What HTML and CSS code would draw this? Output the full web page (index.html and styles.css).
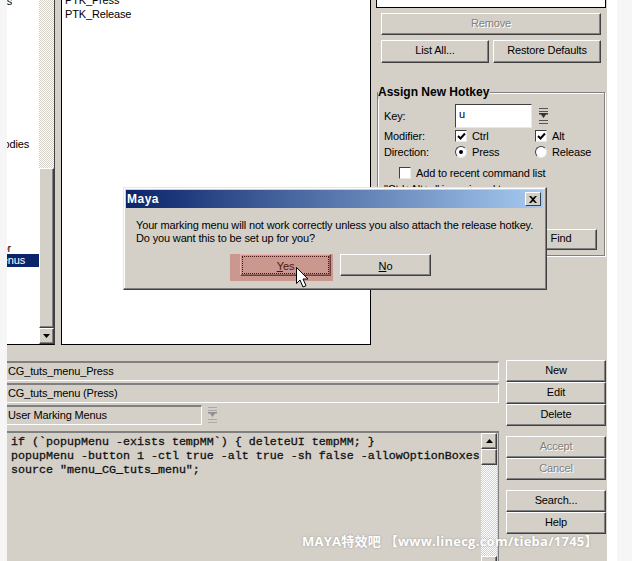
FILE: index.html
```html
<!DOCTYPE html>
<html lang="en">
<head>
<meta charset="utf-8">
<title>Maya Hotkey Editor</title>
<link rel="stylesheet" href="styles.css">
</head>
<body>
<main class="app">
  <section class="top">
    <div class="cat-list">
      <div class="cat-items">
        <div class="cat-text cat-s">s</div>
        <div class="cat-text cat-bodies">bodies</div>
        <div class="cat-text cat-or">or</div>
        <div class="cat-text cat-sel">Menus</div>
      </div>
      <div class="vscroll">
        <div class="track"></div>
        <div class="thumb"></div>
        <div class="arrow"><svg width="7" height="4" viewBox="0 0 7 4"><path d="M0 0h7L3.500 4z"/></svg></div>
      </div>
    </div>
    <div class="cmd-list">
      <div>PTK_Press</div>
      <div>PTK_Release</div>
    </div>
    <div class="side">
      <div class="side-box"></div>
      <button class="btn btn-wide dis">Remove</button>
      <div class="btn-row">
        <button class="btn btn-half">List All...</button>
        <button class="btn btn-half">Restore Defaults</button>
      </div>
      <div class="group">
        <div class="legend">Assign New Hotkey</div>
        <div class="key-row">
          <span class="lab">Key:</span>
          <div class="key-input">u</div>
          <svg class="drag" width="10" height="16" viewBox="0 0 10 16"><path d="M0 .5h9M0 3.500h9" stroke="#555" fill="none"/><path d="M0 5h9v1.500H7L4.500 10 2 6.500H0z" fill="#333"/><path d="M0 12.500h9M0 15.500h9" stroke="#555" fill="none"/></svg>
        </div>
        <div class="opt-row">
          <span class="lab">Modifier:</span>
          <div class="opt"><span class="check"><svg width="9" height="9" viewBox="0 0 9 9"><path d="M1 4l2.500 2.500L8 1.500" fill="none" stroke="#000" stroke-width="2"/></svg></span>Ctrl</div>
          <div class="opt"><span class="check"><svg width="9" height="9" viewBox="0 0 9 9"><path d="M1 4l2.500 2.500L8 1.500" fill="none" stroke="#000" stroke-width="2"/></svg></span>Alt</div>
        </div>
        <div class="opt-row">
          <span class="lab">Direction:</span>
          <div class="opt"><span class="radio on"></span>Press</div>
          <div class="opt"><span class="radio"></span>Release</div>
        </div>
        <div class="add-row"><span class="check"></span>Add to recent command list</div>
        <div class="assigned">"Ctrl+Alt+u" is assigned to:</div>
        <div class="find-row"><button class="btn btn-find">Find</button></div>
      </div>
    </div>
  </section>
  <section class="bottom">
    <div class="form">
      <div class="field">CG_tuts_menu_Press</div>
      <div class="field">CG_tuts_menu (Press)</div>
      <div class="cat-row">
        <div class="field field-short">User Marking Menus</div>
        <svg class="drag drag-off" width="10" height="16" viewBox="0 0 10 16"><path d="M0 .5h9M0 3.500h9" stroke="#aaa" fill="none"/><path d="M0 5h9v1.500H7L4.500 10 2 6.500H0z" fill="#909090"/><path d="M0 12.500h9M0 15.500h9" stroke="#aaa" fill="none"/></svg>
      </div>
      <div class="code-box">
        <pre class="code">if (`popupMenu -exists tempMM`) { deleteUI tempMM; }
popupMenu -button 1 -ctl true -alt true -sh false -allowOptionBoxes
source "menu_CG_tuts_menu";</pre>
        <div class="code-scroll">
          <div class="arrow"><svg width="7" height="4" viewBox="0 0 7 4"><path d="M0 4h7L3.500 0z"/></svg></div>
          <div class="thumb"></div>
          <div class="track"></div>
          <div class="arrow"></div>
        </div>
      </div>
    </div>
    <div class="actions">
      <button class="btn btn-act">New</button>
      <button class="btn btn-act">Edit</button>
      <button class="btn btn-act">Delete</button>
      <button class="btn btn-act dis gap-a">Accept</button>
      <button class="btn btn-act dis">Cancel</button>
      <button class="btn btn-act gap-a">Search...</button>
      <button class="btn btn-act">Help</button>
    </div>
  </section>
</main>
<aside class="dialog">
  <header class="title"><span>Maya</span><span class="close"><svg width="8" height="7" viewBox="0 0 8 7"><path d="M0 0l2 0 2 2 2-2 2 0-3 3.500 3 3.500-2 0-2-2-2 2-2 0 3-3.500z"/></svg></span></header>
  <p class="msg">Your marking menu will not work correctly unless you also attach the release hotkey.<br>Do you want this to be set up for you?</p>
  <div class="dlg-btns">
    <button class="dbtn yes"><u>Y</u>es</button>
    <button class="dbtn"><u>N</u>o</button>
  </div>
</aside>
<div class="mark"></div>
<svg class="cursor" width="13" height="22" viewBox="0 0 13 22"><path d="M.5.500v16l3.500-3.500 3 7 3-1.300-3-6.700h5z" fill="#fff" stroke="#000"/></svg>
<div class="watermark">MAYA特效吧 【www.linecg.com/tieba/1745】</div>
</body>
</html>
```
FILE: styles.css
```css
* { box-sizing: border-box; }
html { background: linear-gradient(90deg, #f6f6f6 0 7px, #fff 7px 617px, #f6f6f6 617px); }
html, body { margin: 0; height: 561px; overflow: hidden; }
body { font: 11px/14px "Liberation Sans", Arial, sans-serif; letter-spacing: -.15px; color: #000; }
button { font: inherit; letter-spacing: inherit; color: inherit; padding: 0 0 3px; margin: 0; }

.app { width: 600px; height: 561px; margin-left: 7px; background: #d4d0c8; display: flex; flex-direction: column; overflow: hidden; }
.top { height: 345px; display: flex; flex: none; }
.bottom { flex: 1; display: flex; padding-top: 15px; min-height: 0; }

.cat-list { width: 48px; height: 345px; flex: none; display: flex; border-bottom: 1px solid #000; border-right: 1px solid #404040; background: #fff; }
.cat-items { width: 32px; height: 344px; position: relative; overflow: hidden; background: #fff; }
.cat-text { position: absolute; white-space: nowrap; }
.cat-s { top: -6px; right: 27px; }
.cat-bodies { top: 137px; right: 10px; }
.cat-or { top: 241px; right: 28px; }
.cat-sel { top: 254px; left: 0; width: 32px; height: 13px; line-height: 13px; background: #0a246a; color: #fff; padding-right: 14px; display: flex; justify-content: flex-end; }

.vscroll { width: 15px; height: 344px; display: flex; flex-direction: column; }
.track { flex: 1; background: repeating-conic-gradient(#d4d0c8 0 25%, #fff 0 50%) 0 0 / 2px 2px; }
.thumb, .arrow { flex: none; background: #d4d0c8; border: 1px solid; border-color: #fff #404040 #404040 #fff; box-shadow: inset -1px -1px 0 #808080; display: flex; align-items: center; justify-content: center; }
.vscroll .track { flex: none; height: 168px; }
.vscroll .thumb { height: 160px; }
.arrow { height: 16px; }

.cmd-list { width: 310px; height: 345px; margin-left: 6px; flex: none; background: #fff; border: 1px solid #000; border-top: 0; overflow: hidden; padding: 0 0 0 3px; }
.cmd-list div:first-child { margin-top: -7px; }

.side { width: 231px; margin-left: 5px; flex: none; display: flex; flex-direction: column; }
.side-box { height: 8px; width: 230px; background: #fff; border: 1px solid #000; border-top: 0; flex: none; }
.btn { background: #d4d0c8; border: 1px solid; border-color: #fff #404040 #404040 #fff; box-shadow: inset -1px -1px 0 #808080; display: block; text-align: center; }
.btn-wide { width: 220px; height: 22px; margin: 5px 0 0 5px; }
.btn-row { display: flex; gap: 4px; margin: 5px 0 0 5px; }
.btn-half { width: 108px; height: 23px; }
.dis { color: #808080; text-shadow: 1px 1px 0 #fff; }

.group { position: relative; width: 228px; height: 164px; margin: 29px 0 0 1px; border: 1px solid #808080; box-shadow: inset 1px 1px 0 #fff, 1px 1px 0 #fff; padding: 11px 0 0 6px; }
.legend { position: absolute; left: 0; top: -8px; background: #d4d0c8; font-size: 12px; font-weight: 700; letter-spacing: 0; padding-right: 1px; }
.key-row { display: flex; align-items: center; height: 24px; }
.key-row .lab { padding-bottom: 1px; }
.lab { width: 71px; flex: none; }
.key-input { width: 77px; height: 24px; background: #fff; border: 1px solid; border-color: #404040 #e8e8e8 #e8e8e8 #404040; padding: 2px 0 0 3px; }
.drag { margin-left: 7px; flex: none; }
.opt-row { display: flex; align-items: center; height: 16px; }
.opt { width: 80px; display: flex; align-items: center; flex: none; }
.check { width: 12px; height: 12px; background: #fff; border: 1px solid; border-color: #404040 #e8e8e8 #e8e8e8 #404040; margin-right: 5px; display: flex; align-items: center; justify-content: center; flex: none; }
.radio { width: 12px; height: 12px; border-radius: 50%; background: #fff; border: 1px solid; border-color: #404040 #e8e8e8 #e8e8e8 #404040; margin-right: 5px; flex: none; position: relative; }
.radio.on::after { content: ""; position: absolute; left: 3px; top: 3px; width: 4px; height: 4px; border-radius: 50%; background: #000; }
.add-row { display: flex; align-items: center; height: 16px; margin: 5px 0 0 15px; }
.assigned { height: 14px; margin-top: 1px; }
.find-row { display: flex; justify-content: flex-end; margin: 33px 7px 0 0; }
.btn-find { width: 72px; height: 21px; }

.form { width: 492px; flex: none; display: flex; flex-direction: column; gap: 2px; padding-top: 1px; }
.field { height: 20px; border: 2px solid; border-color: #808080 #fff #fff #808080; border-width: 2px 1px 1px 0; padding: 1px 0 0 1px; line-height: 15px; }
.cat-row { display: flex; align-items: center; }
.field-short { width: 195px; }
.drag-off { margin-left: 6px; }
.code-box { flex: 1; margin-top: 4px; border-top: 2px solid #808080; border-right: 1px solid #808080; display: flex; min-height: 0; overflow: hidden; }
.code { flex: 1; margin: 0; padding: 2px 0 0 4px; font: 11.67px/14px "Liberation Mono", "Courier New", monospace; letter-spacing: 0; -webkit-text-stroke: .3px #111; color: #111; }
.code-scroll { width: 16px; flex: none; display: flex; flex-direction: column; margin-right: 1px; }
.code-scroll .thumb { height: 16px; }
.code-scroll .track { flex: none; height: 91px; }

.actions { width: 100px; margin-left: 7px; flex: none; display: flex; flex-direction: column; }
.btn-act { width: 100px; height: 22px; }
.gap-a { margin-top: 10px; }

.dialog { position: absolute; left: 123px; top: 187px; width: 424px; height: 103px; background: #d4d0c8; border: 1px solid; border-color: #e8e6e0 #404040 #404040 #e8e6e0; box-shadow: inset -1px -1px 0 #808080, inset 1px 1px 0 #fff; padding: 2px 3px 0 2px; }
.title { height: 18px; display: flex; align-items: center; justify-content: space-between; background: linear-gradient(90deg, #0a246a, #a6caf0); color: #fff; font-weight: 700; font-size: 12px; letter-spacing: .5px; padding: 0 2px 0 1px; }
.close { width: 16px; height: 14px; background: #d4d0c8; border: 1px solid; border-color: #fff #404040 #404040 #fff; display: flex; align-items: center; justify-content: center; color: #000; }
.msg { margin: 11px 0 0 10px; line-height: 13px; white-space: nowrap; }
.dlg-btns { display: flex; gap: 9px; margin: 9px 0 0 114px; }
.dbtn { width: 91px; height: 22px; background: #d4d0c8; border: 1px solid; border-color: #fff #404040 #404040 #fff; box-shadow: inset -1px -1px 0 #808080; padding: 1px 0 0; }
.yes { outline: 1px dotted #000; outline-offset: -3px; }
.mark { position: absolute; left: 230px; top: 254px; width: 103px; height: 27px; background: rgba(190, 60, 50, .38); }
.cursor { position: absolute; left: 296px; top: 267px; }
.watermark { position: absolute; left: 302px; top: 533px; font: 700 13px/16px "Open Sans", "Noto Sans CJK SC", sans-serif; letter-spacing: .25px; color: #fff; text-shadow: 0 0 2px rgba(120,120,120,.7); white-space: nowrap; }
```
